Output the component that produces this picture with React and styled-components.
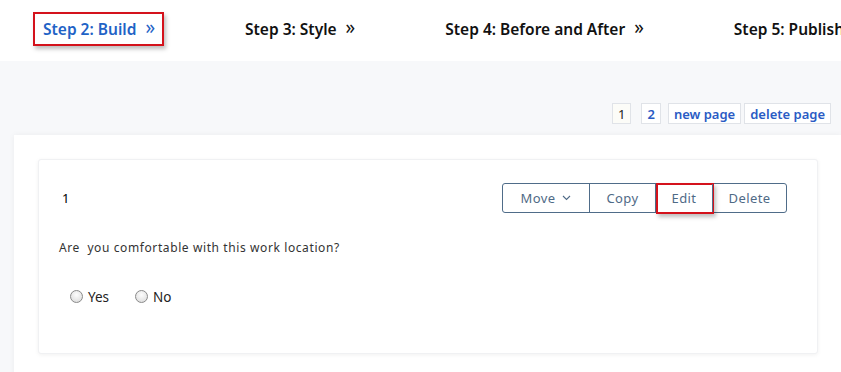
import styled, { createGlobalStyle } from 'styled-components';

const Global = createGlobalStyle`
	body {
		margin: 0;
		background: #f7f8fa;
		font-family: "Noto Sans", "Open Sans", sans-serif;
		overflow: hidden;
	}
`;

const steps = [
	{ label: 'Step 2: Build', active: true },
	{ label: 'Step 3: Style' },
	{ label: 'Step 4: Before and After' },
	{ label: 'Step 5: Publish', last: true },
];

const Header = styled.div`
	height: 61px;
	background: #fff;
	display: flex;
	align-items: center;
	gap: 71px;
	padding-left: 33px;
	white-space: nowrap;
	overflow: hidden;
`;

const StepItem = styled.div`
	display: flex;
	align-items: center;
	gap: 9px;
	padding: 0 7px 0 8px;
	height: 30px;
	flex-shrink: 0;
	font-size: 15.5px;
	font-weight: 600;
	color: ${p => (p.$active ? '#1f63c6' : '#111')};
	border: 2px solid ${p => (p.$active ? '#d4121c' : 'transparent')};
	box-shadow: ${p => (p.$active ? '2px 3px 4px rgba(0,0,0,0.25)' : 'none')};
	margin-top: -3px;
`;

const Chevron = styled.span`
	font-size: 19px;
	font-weight: 400;
	line-height: 1;
	margin-top: -3px;
`;

const Pager = styled.div`
	display: flex;
	justify-content: flex-end;
	align-items: center;
	gap: 3px;
	padding: 41px 10px 0 0;
	height: 23px;
`;

const PageBtn = styled.div`
	height: 21px;
	box-sizing: border-box;
	padding: 0 5px;
	margin-right: ${p => p.$space || 0}px;
	display: flex;
	align-items: center;
	border: 1px solid #e0e3e8;
	background: ${p => (p.$current ? '#fcfcf8' : '#fff')};
	color: ${p => (p.$current ? '#222' : '#2a5bc4')};
	font-size: 13px;
	font-weight: ${p => (p.$current ? 400 : 600)};
`;

const Panel = styled.div`
	margin: 10px 0 0 14px;
	background: #fff;
	padding: 24px 22px 24px 24px;
	box-shadow: 0 0 6px rgba(0,0,0,0.05);
	height: 260px;
`;

const Card = styled.div`
	width: 780px;
	box-sizing: border-box;
	height: 195px;
	background: #fff;
	border: 1px solid #f0f1f3;
	border-radius: 3px;
	box-shadow: 0 1px 4px rgba(0,0,0,0.06);
	padding: 23px 30px 0 20px;
`;

const TopRow = styled.div`
	display: flex;
	justify-content: space-between;
	align-items: center;
	height: 30px;
`;

const Num = styled.div`
	font-size: 13px;
	color: #000;
	padding-left: 3px;
`;

const BtnGroup = styled.div`
	display: flex;
	border: 1px solid #4f6c89;
	border-radius: 3px;
	height: 28px;
`;

const GroupBtn = styled.div`
	width: ${p => p.$w}px;
	box-sizing: border-box;
	display: flex;
	align-items: center;
	justify-content: center;
	gap: 7px;
	font-size: 13px;
	letter-spacing: 0.4px;
	color: #4f6a86;
	border-left: ${p => (p.$first ? 'none' : '1px solid #4f6c89')};
	position: relative;
`;

const Highlight = styled.div`
	position: absolute;
	inset: -1px -2px -2px 0;
	border: 2px solid #d4121c;
	box-shadow: 2px 3px 4px rgba(0,0,0,0.25);
`;

const Question = styled.div`
	margin-top: 26px;
	font-size: 12px;
	letter-spacing: 0.6px;
	color: #333;
	white-space: pre;
`;

const Options = styled.div`
	display: flex;
	gap: 26px;
	margin-top: 32px;
	padding-left: 11px;
`;

const Option = styled.label`
	display: flex;
	align-items: center;
	gap: 5px;
	font-size: 13.5px;
	color: #222;
`;

const Radio = styled.span`
	width: 11px;
	height: 11px;
	border-radius: 50%;
	border: 1px solid #8a8a8a;
	background: radial-gradient(circle at 50% 35%, #fdfdfd 0%, #d8d8d8 100%);
	margin-top: -2px;
`;

export default function App() {
	return (
		<>
			<Global />
			<Header>
				{steps.map(s => (
					<StepItem key={s.label} $active={s.active}>
						{s.label}
						{!s.last && <Chevron>»</Chevron>}
					</StepItem>
				))}
			</Header>
			<Pager>
				<PageBtn $current $space={7}>1</PageBtn>
				<PageBtn $space={4}>2</PageBtn>
				<PageBtn>new page</PageBtn>
				<PageBtn>delete page</PageBtn>
			</Pager>
			<Panel>
				<Card>
					<TopRow>
						<Num>1</Num>
						<BtnGroup>
							<GroupBtn $w={86} $first>
								Move
								<svg width="9" height="6" viewBox="0 0 9 6">
									<path d="M1 1l3.5 3.5L8 1" fill="none" stroke="#4f6a86" strokeWidth="1.1" />
								</svg>
							</GroupBtn>
							<GroupBtn $w={66}>Copy</GroupBtn>
							<GroupBtn $w={57}>
								Edit
								<Highlight />
							</GroupBtn>
							<GroupBtn $w={74}>Delete</GroupBtn>
						</BtnGroup>
					</TopRow>
					<Question>Are  you comfortable with this work location?</Question>
					<Options>
						<Option><Radio />Yes</Option>
						<Option><Radio />No</Option>
					</Options>
				</Card>
			</Panel>
		</>
	);
}
